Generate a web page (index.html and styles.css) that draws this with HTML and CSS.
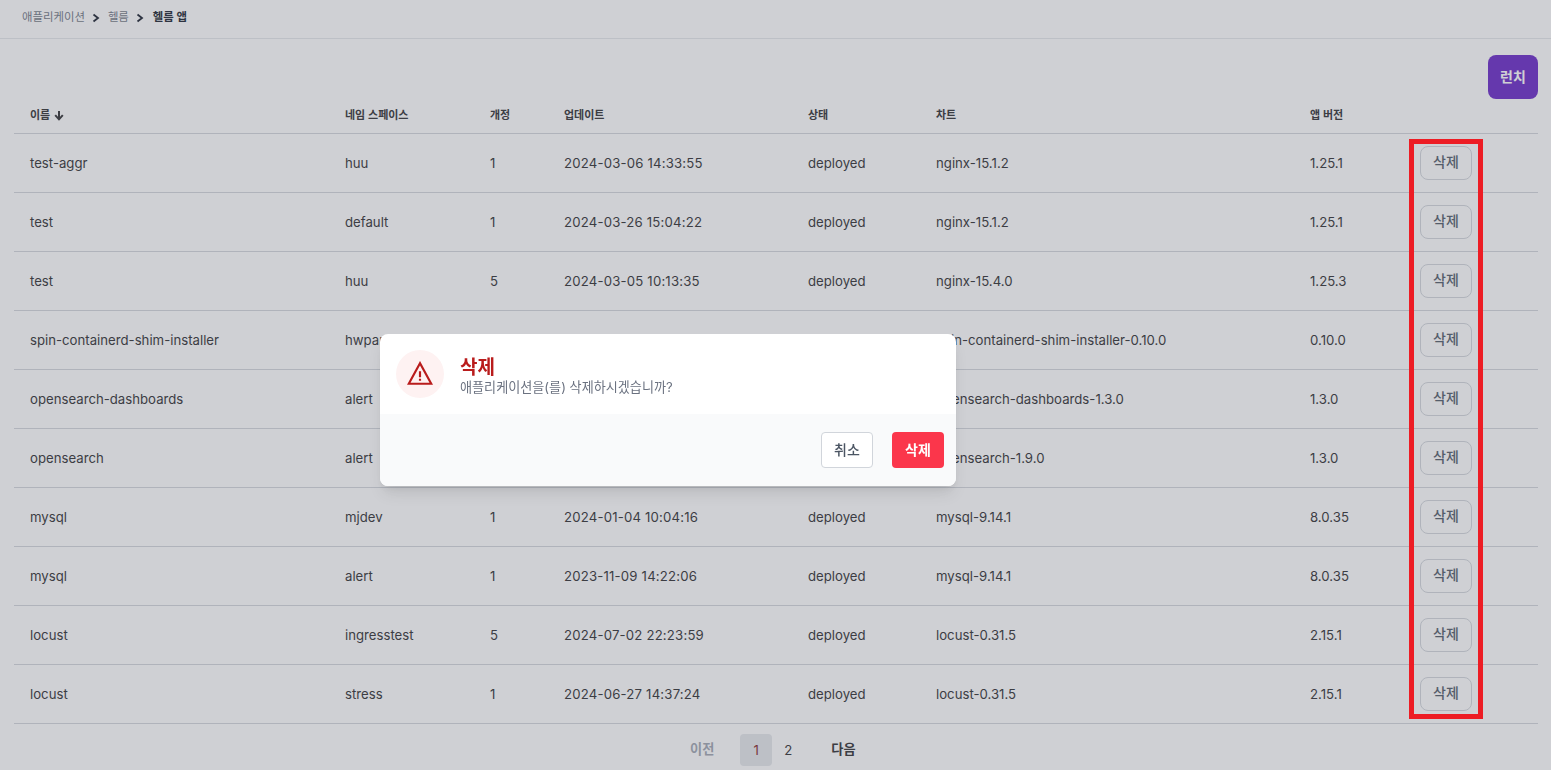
FILE: index.html
```html
<!DOCTYPE html>
<html lang="ko">
<head>
  <meta charset="UTF-8">
  <meta name="viewport" content="width=device-width, initial-scale=1.0">
  <title>헬름 앱</title>
  <link rel="stylesheet" href="styles.css">
</head>
<body>

<nav class="breadcrumb">
  <a href="#">애플리케이션</a>
  <svg class="crumb-sep" viewBox="0 0 10 10"><path d="M2.5 1.5 7 5 2.5 8.5" fill="none" stroke="currentColor" stroke-width="1.8"/></svg>
  <a href="#">헬름</a>
  <svg class="crumb-sep" viewBox="0 0 10 10"><path d="M2.5 1.5 7 5 2.5 8.5" fill="none" stroke="currentColor" stroke-width="1.8"/></svg>
  <b>헬름 앱</b>
</nav>

<main class="content">
  <div class="toolbar">
    <button class="btn-launch">런치</button>
  </div>

  <table class="apps">
    <colgroup>
      <col class="c-name"><col class="c-ns"><col class="c-rev"><col class="c-date">
      <col class="c-status"><col class="c-chart"><col class="c-ver"><col class="c-action">
    </colgroup>
    <thead>
      <tr>
        <th>이름 <svg class="sort" viewBox="0 0 10 10"><path d="M5 .5v8M1.2 4.6 5 8.8 8.8 4.6" fill="none" stroke="currentColor" stroke-width="2"/></svg></th>
        <th>네임 스페이스</th><th>개정</th><th>업데이트</th><th>상태</th><th>차트</th><th>앱 버전</th><th></th>
      </tr>
    </thead>
    <tbody>
      <tr><td>test-aggr</td><td>huu</td><td>1</td><td>2024-03-06 14:33:55</td><td>deployed</td><td>nginx-15.1.2</td><td>1.25.1</td><td><button class="btn-del">삭제</button></td></tr>
      <tr><td>test</td><td>default</td><td>1</td><td>2024-03-26 15:04:22</td><td>deployed</td><td>nginx-15.1.2</td><td>1.25.1</td><td><button class="btn-del">삭제</button></td></tr>
      <tr><td>test</td><td>huu</td><td>5</td><td>2024-03-05 10:13:35</td><td>deployed</td><td>nginx-15.4.0</td><td>1.25.3</td><td><button class="btn-del">삭제</button></td></tr>
      <tr><td>spin-containerd-shim-installer</td><td>hwpark</td><td>1</td><td>2024-03-04 11:20:41</td><td>deployed</td><td>spin-containerd-shim-installer-0.10.0</td><td>0.10.0</td><td><button class="btn-del">삭제</button></td></tr>
      <tr><td>opensearch-dashboards</td><td>alert</td><td>1</td><td>2023-11-09 15:02:10</td><td>deployed</td><td>opensearch-dashboards-1.3.0</td><td>1.3.0</td><td><button class="btn-del">삭제</button></td></tr>
      <tr><td>opensearch</td><td>alert</td><td>1</td><td>2023-11-09 14:58:33</td><td>deployed</td><td>opensearch-1.9.0</td><td>1.3.0</td><td><button class="btn-del">삭제</button></td></tr>
      <tr><td>mysql</td><td>mjdev</td><td>1</td><td>2024-01-04 10:04:16</td><td>deployed</td><td>mysql-9.14.1</td><td>8.0.35</td><td><button class="btn-del">삭제</button></td></tr>
      <tr><td>mysql</td><td>alert</td><td>1</td><td>2023-11-09 14:22:06</td><td>deployed</td><td>mysql-9.14.1</td><td>8.0.35</td><td><button class="btn-del">삭제</button></td></tr>
      <tr><td>locust</td><td>ingresstest</td><td>5</td><td>2024-07-02 22:23:59</td><td>deployed</td><td>locust-0.31.5</td><td>2.15.1</td><td><button class="btn-del">삭제</button></td></tr>
      <tr><td>locust</td><td>stress</td><td>1</td><td>2024-06-27 14:37:24</td><td>deployed</td><td>locust-0.31.5</td><td>2.15.1</td><td><button class="btn-del">삭제</button></td></tr>
    </tbody>
  </table>

  <div class="pager">
    <span class="pager-prev">이전</span>
    <span class="pager-num current">1</span>
    <span class="pager-num">2</span>
    <span class="pager-next">다음</span>
  </div>
</main>

<div class="backdrop"></div>

<div class="modal">
  <div class="modal-body">
    <div class="modal-icon">
      <svg viewBox="0 0 24 24" fill="none" stroke="currentColor" stroke-width="2"><path d="M12 2 1.6 21h20.8z"/><path d="M12 9.5v5.5M12 16.3v2"/></svg>
    </div>
    <div>
      <h3 class="modal-title">삭제</h3>
      <p class="modal-text">애플리케이션을(를) 삭제하시겠습니까?</p>
    </div>
  </div>
  <div class="modal-footer">
    <button class="btn-cancel">취소</button>
    <button class="btn-confirm">삭제</button>
  </div>
</div>

<div class="highlight"></div>

</body>
</html>
```

FILE: styles.css
```css
* {
  box-sizing: border-box;
}
html, body {
  height: 770px;
  overflow: hidden;
}
body {
  margin: 0;
  font-family: Inter, "Noto Sans CJK KR", sans-serif;
  font-size: 13.2px;
  color: #27272a;
  background-color: #fff;
}
button {
  font-family: inherit;
  cursor: pointer;
}
.breadcrumb {
  display: flex;
  align-items: center;
  height: 39px;
  padding: 0 22px 6px;
  border-bottom: 1px solid #e5e7eb;
  font-size: 11.4px;
}
.breadcrumb a {
  color: #6b7280;
  text-decoration: none;
}
.breadcrumb b {
  margin-left: 1px;
  color: #111827;
  font-weight: 700;
}
.crumb-sep {
  width: 10px;
  height: 10px;
  margin: 4px 7px 0 6px;
  color: #111827;
}
.content {
  padding: 16px 13px 0 14px;
}
.toolbar {
  display: flex;
  justify-content: flex-end;
}
.btn-launch {
  width: 50px;
  height: 44px;
  padding: 0 0 2px;
  border: none;
  border-radius: 8px;
  background-color: #6420c6;
  color: #fff;
  font-size: 14px;
  font-weight: 600;
}
.apps {
  width: 100%;
  border-collapse: collapse;
  table-layout: fixed;
}
.c-name { width: 315px; }
.c-ns { width: 145px; }
.c-rev { width: 74px; }
.c-date { width: 244px; }
.c-status { width: 128px; }
.c-chart { width: 374px; }
.c-ver { width: 110px; }
.apps th {
  height: 34px;
  padding: 0 16px 3px;
  border-bottom: 1px solid #d1d5db;
  font-size: 11px;
  font-weight: 600;
  text-align: left;
  white-space: nowrap;
}
.sort {
  width: 10px;
  height: 11px;
  margin-left: 1px;
  vertical-align: -2px;
}
.apps td {
  height: 59px;
  padding: 0 16px;
  border-bottom: 1px solid #d1d5db;
  white-space: nowrap;
}
.apps td:nth-child(4) {
  letter-spacing: 0.18px;
}
.btn-del {
  display: block;
  width: 52px;
  height: 34px;
  padding: 0 0 3px;
  border: 1px solid #d1d5db;
  border-radius: 8px;
  background-color: transparent;
  color: #4b5563;
  font-size: 14px;
  font-weight: 500;
}
.pager {
  display: flex;
  align-items: center;
  height: 32px;
  margin-top: 10px;
  padding-left: 676px;
}
.pager-prev {
  color: #9ca3af;
  font-weight: 600;
  margin-right: 24px;
  margin-bottom: 2px;
}
.pager-num {
  width: 32px;
  height: 32px;
  line-height: 32px;
  text-align: center;
  border-radius: 4px;
}
.pager-num.current {
  margin-left: 2px;
  background-color: #e5e7eb;
  color: #7f1d1d;
}
.pager-next {
  margin-left: 27px;
  margin-bottom: 2px;
  font-weight: 600;
}
.backdrop {
  position: fixed;
  inset: 0;
  background-color: rgba(107, 110, 122, 0.32);
}
.modal {
  position: fixed;
  left: 380px;
  top: 334px;
  width: 576px;
  height: 152px;
  border-radius: 8px;
  overflow: hidden;
  background-color: #fff;
  box-shadow: 0 10px 15px -3px rgba(0,0,0,0.1), 0 4px 6px -2px rgba(0,0,0,0.05);
}
.modal-body {
  display: flex;
  height: 80px;
  padding: 16px;
}
.modal-icon {
  display: flex;
  align-items: center;
  justify-content: center;
  flex-shrink: 0;
  width: 48px;
  height: 48px;
  margin-right: 16px;
  border-radius: 50%;
  background-color: #fef2f2;
  color: #b91c1c;
}
.modal-icon svg {
  width: 26px;
  height: 26px;
}
.modal-title {
  margin: 4px 0 0;
  font-size: 19px;
  line-height: 28px;
  font-weight: 600;
  color: #b91c1c;
}
.modal-text {
  margin: -3px 0 0;
  font-size: 13.1px;
  line-height: 16px;
  color: #6b7280;
}
.modal-footer {
  display: flex;
  justify-content: flex-end;
  gap: 19px;
  height: 72px;
  padding: 18px 12px;
  background-color: #f9fafb;
}
.btn-cancel, .btn-confirm {
  width: 52px;
  height: 36px;
  padding: 0 0 3px;
  border-radius: 4px;
  font-size: 14px;
}
.btn-cancel {
  border: 1px solid #d1d5db;
  background-color: #fff;
  color: #4b5563;
  font-weight: 500;
}
.btn-confirm {
  border: none;
  background-color: #fb364b;
  color: #fff;
  font-weight: 600;
}
.highlight {
  position: fixed;
  left: 1409px;
  top: 139px;
  width: 74px;
  height: 580px;
  border: 5px solid #ed1c24;
}
```
